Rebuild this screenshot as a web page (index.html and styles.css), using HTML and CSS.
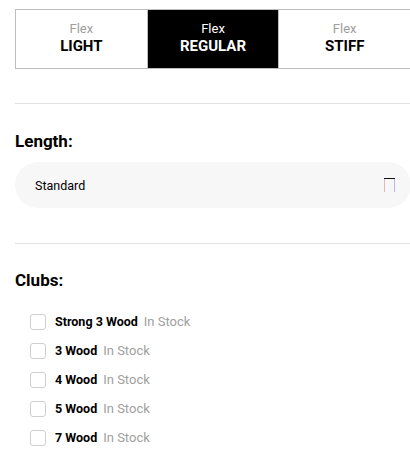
FILE: index.html
```html
<!DOCTYPE html>
<html>
<head>
<meta charset="utf-8">
<link rel="stylesheet" href="styles.css">
</head>
<body>
<div class="page">
  <div class="tabs">
    <div class="tab"><span class="tab-small">Flex</span><span class="tab-big">LIGHT</span></div>
    <div class="tab tab-active"><span class="tab-small">Flex</span><span class="tab-big">REGULAR</span></div>
    <div class="tab"><span class="tab-small">Flex</span><span class="tab-big">STIFF</span></div>
  </div>

  <div class="section">
    <h3 class="heading">Length:</h3>
    <div class="select">
      <span class="select-value">Standard</span>
      <svg class="select-icon" width="11" height="14" viewBox="0 0 11 14">
        <path d="M0.5 14 V0.5" stroke="#e2b8b8" stroke-width="1" fill="none"/>
        <path d="M10.5 14 V0.5" stroke="#b8b8e6" stroke-width="1" fill="none"/>
        <path d="M0 0.5 H11" stroke="#111" stroke-width="1" fill="none"/>
      </svg>
    </div>
  </div>

  <div class="section">
    <h3 class="heading">Clubs:</h3>
    <ul class="clubs">
      <li class="club"><span class="check"></span><span class="club-name">Strong 3 Wood</span><span class="stock">In Stock</span></li>
      <li class="club"><span class="check"></span><span class="club-name">3 Wood</span><span class="stock">In Stock</span></li>
      <li class="club"><span class="check"></span><span class="club-name">4 Wood</span><span class="stock">In Stock</span></li>
      <li class="club"><span class="check"></span><span class="club-name">5 Wood</span><span class="stock">In Stock</span></li>
      <li class="club"><span class="check"></span><span class="club-name">7 Wood</span><span class="stock">In Stock</span></li>
    </ul>
  </div>
</div>
</body>
</html>
```

FILE: styles.css
```css
html, body {
  margin: 0;
  padding: 0;
  background: #fff;
  overflow: hidden;
}
body {
  font-family: Roboto, "Liberation Sans", Arial, sans-serif;
  color: #000;
}
.page {
  padding: 9px 0 0 15px;
  width: 396px;
}
.tabs {
  display: flex;
  height: 60px;
  box-sizing: border-box;
  border: 1px solid #bdbdbd;
}
.tab {
  flex: 1;
  display: flex;
  flex-direction: column;
  align-items: center;
  justify-content: center;
  border-left: 1px solid #bdbdbd;
  padding-bottom: 3px;
}
.tab:first-child {
  border-left: none;
}
.tab-active {
  background: #000;
  color: #fff;
}
.tab-small {
  font-size: 13px;
  line-height: 17px;
  color: #9e9e9e;
}
.tab-active .tab-small {
  color: #fff;
}
.tab-big {
  font-size: 15px;
  line-height: 19px;
  font-weight: 700;
}
.section {
  margin-top: 34px;
  border-top: 1px solid #e2e2e2;
  padding-top: 27px;
}
.section + .section {
  margin-top: 35px;
  padding-top: 26px;
}
.heading {
  margin: 0;
  font-size: 17px;
  line-height: 20px;
  font-weight: 700;
}
.select {
  margin-top: 11px;
  height: 46px;
  border-radius: 23px;
  background: #f7f7f7;
  display: flex;
  align-items: center;
  justify-content: space-between;
  padding: 0 16px 0 20px;
}
.select-value {
  font-size: 12.5px;
}
.select-icon {
  display: block;
}
.clubs {
  list-style: none;
  margin: 17px 0 0;
  padding: 0 0 0 15px;
}
.club {
  height: 29px;
  display: flex;
  align-items: center;
  font-size: 13px;
}
.check {
  width: 16px;
  height: 16px;
  box-sizing: border-box;
  border: 1px solid #cfcfcf;
  border-radius: 3px;
  margin-right: 9px;
}
.club-name {
  font-size: 12.5px;
  font-weight: 700;
}
.stock {
  margin-left: 6px;
  color: #a0a0a0;
}
```
